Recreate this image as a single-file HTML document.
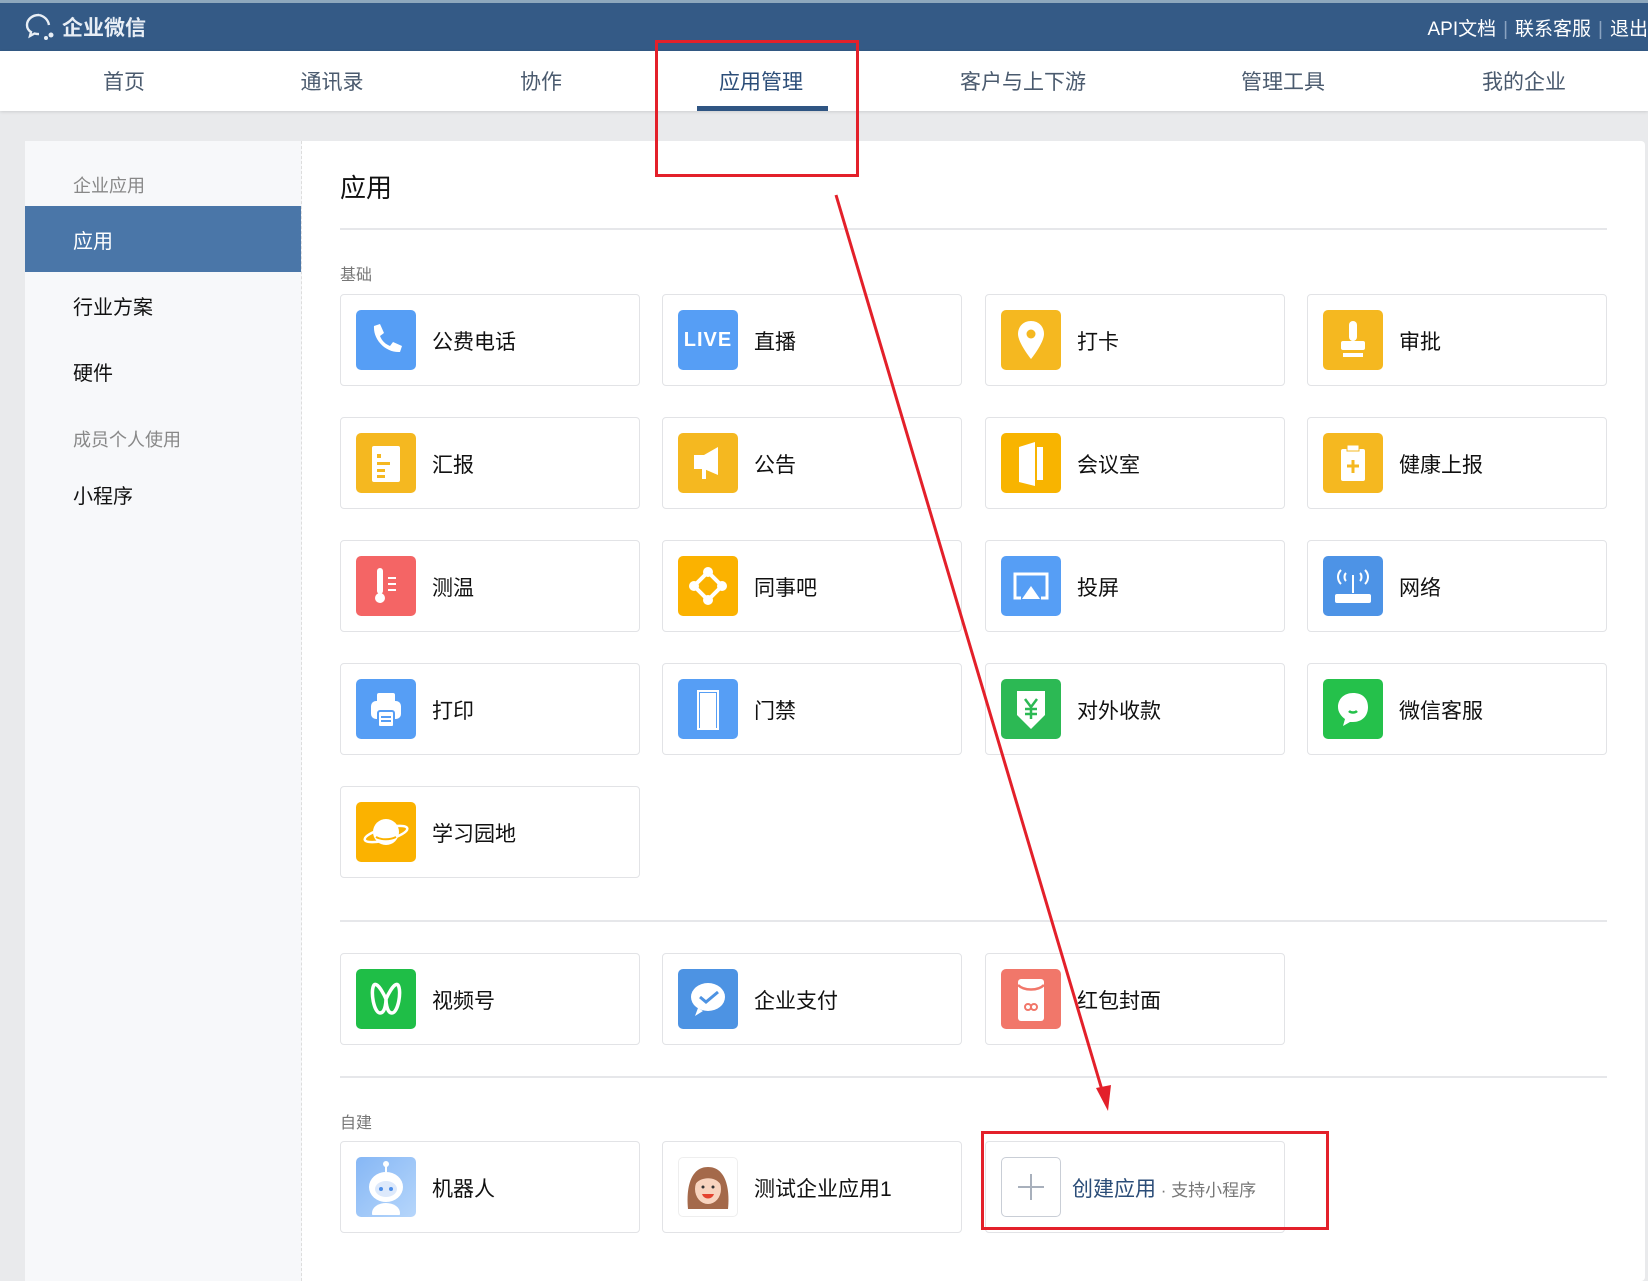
<!DOCTYPE html>
<html><head><meta charset="utf-8">
<style>
*{margin:0;padding:0;box-sizing:border-box}
body{width:1648px;height:1268px;overflow:hidden;background:#e9eaec;font-family:"Liberation Sans","Noto Sans CJK SC",sans-serif;position:relative}
.top{position:absolute;left:0;top:0;width:1648px;height:51px;background:#345a86;border-top:3px solid #8ea8bd}
.logo{position:absolute;left:24px;top:9px;color:#e8eef5;font-size:21px;font-weight:bold;display:flex;align-items:center;gap:4px}
.tr{position:absolute;right:0;top:11px;color:#fff;font-size:19px}
.tr span{margin:0 7px;color:#8aa3c0}
.nav{position:absolute;left:0;top:51px;width:1648px;height:60px;background:#fff;box-shadow:0 1px 3px rgba(0,0,0,.12)}
.nav div{position:absolute;top:15px;font-size:21px;color:#4a5a6e;transform:translateX(-50%)}
.nav .act{color:#2b4d78}
.ul{position:absolute;left:697px;top:106px;width:131px;height:5px;background:#2f5583}
.card{position:absolute;left:25px;top:141px;width:1620px;height:1140px;background:#fff;border-radius:4px}
.side{position:absolute;left:25px;top:141px;width:277px;height:1140px;background:#f7f8fa;border-right:1px dashed #ddd}
.side div{position:absolute;left:48px;font-size:20px;color:#111}
.side .g{color:#888;font-size:18px}
.side .on{left:0;width:276px;height:66px;top:65px;background:#4a76a8}
.title{position:absolute;left:340px;top:168px;font-size:26px;color:#111}
.hr{position:absolute;left:340px;width:1267px;height:2px;background:#e6e7ea}
.lbl{position:absolute;left:340px;font-size:16px;color:#777}
.t{position:absolute;width:300px;height:92px;border:1px solid #e2e3e6;border-radius:4px;background:#fff}
.t .i{position:absolute;left:15px;top:15px;width:60px;height:60px;border-radius:5px;display:flex;align-items:center;justify-content:center;overflow:hidden}
.t .n{position:absolute;left:91px;top:31px;font-size:21px;color:#111;white-space:nowrap}
.b{background:#569ef5}.y{background:#f5b820}.r{background:#f46565}.gr{background:#22bf4a}
.red{position:absolute;border:3px solid #e3202a}
</style></head><body>
<div class="top">
 <div class="logo"><svg width="34" height="30" viewBox="0 0 34 30"><path d="M15 3C8 3 3 7.5 3 13c0 3 1.5 5.5 4 7l-1 4 4.5-2.5c1.4.4 3 .6 4.5.6" fill="none" stroke="#e8eef5" stroke-width="2.4"/><path d="M25 13c-1-5.5-5-9-10-10" fill="none" stroke="#e8eef5" stroke-width="2.4"/><circle cx="27" cy="23" r="2.5" fill="#e8eef5"/><circle cx="22" cy="26" r="2" fill="#e8eef5"/></svg>企业微信</div>
 <div class="tr">API文档<span>|</span>联系客服<span>|</span>退出</div>
</div>
<div class="nav">
 <div style="left:124px">首页</div><div style="left:332px">通讯录</div><div style="left:541px">协作</div><div class="act" style="left:761px">应用管理</div><div style="left:1023px">客户与上下游</div><div style="left:1283px">管理工具</div><div style="left:1524px">我的企业</div>
</div>
<div class="ul"></div>
<div class="card"></div>
<div class="side">
 <div class="g" style="top:31px">企业应用</div>
 <div class="on"></div>
 <div style="top:84px;color:#fff">应用</div>
 <div style="top:150px">行业方案</div>
 <div style="top:216px">硬件</div>
 <div class="g" style="top:285px">成员个人使用</div>
 <div style="top:339px">小程序</div>
</div>
<div class="title">应用</div>
<div class="hr" style="top:228px"></div>
<div class="lbl" style="top:261px">基础</div>

<div class="t" style="left:340px;top:294px"><div class="i b"><svg width="40" height="40" viewBox="0 0 40 40"><path d="M8 6l6-2 4 9-4 3c2 5 5 8 10 10l3-4 9 4-2 6c-14 1-27-12-26-26z" fill="#fff"/></svg></div><div class="n">公费电话</div></div>
<div class="t" style="left:662px;top:294px"><div class="i b" style="color:#fff;font-weight:bold;font-size:20px;letter-spacing:1px">LIVE</div><div class="n">直播</div></div>
<div class="t" style="left:985px;top:294px"><div class="i y"><svg width="40" height="46" viewBox="0 0 40 46"><path d="M20 4c-8 0-13 6-13 13 0 9 13 25 13 25s13-16 13-25C33 10 28 4 20 4z" fill="#fff"/><circle cx="20" cy="17" r="4.5" fill="#f5b820"/></svg></div><div class="n">打卡</div></div>
<div class="t" style="left:1307px;top:294px"><div class="i y"><svg width="40" height="44" viewBox="0 0 40 44"><rect x="16" y="3" width="8" height="20" rx="4" fill="#fff"/><rect x="8" y="23" width="24" height="9" rx="2" fill="#fff"/><rect x="10" y="35" width="20" height="4" fill="#fff"/></svg></div><div class="n">审批</div></div>

<div class="t" style="left:340px;top:417px"><div class="i y"><svg width="36" height="44" viewBox="0 0 36 44"><rect x="4" y="5" width="28" height="36" rx="2" fill="#fff"/><rect x="9" y="13" width="4" height="4" fill="#f5b820"/><rect x="9" y="21" width="13" height="3" fill="#f5b820"/><rect x="9" y="28" width="8" height="3" fill="#f5b820"/><rect x="9" y="34" width="8" height="3" fill="#f5b820"/></svg></div><div class="n">汇报</div></div>
<div class="t" style="left:662px;top:417px"><div class="i y"><svg width="40" height="40" viewBox="0 0 40 40"><path d="M6 12h10l14-8v28l-14-6H6z" fill="#fff"/><rect x="14" y="24" width="4" height="12" fill="#fff"/></svg></div><div class="n">公告</div></div>
<div class="t" style="left:985px;top:417px"><div class="i y" style="background:#f8b400"><svg width="36" height="48" viewBox="0 0 36 48"><path d="M6 8l16-5v44l-16-4z" fill="#fff"/><rect x="24" y="8" width="6" height="33" fill="#fff"/></svg></div><div class="n">会议室</div></div>
<div class="t" style="left:1307px;top:417px"><div class="i y"><svg width="32" height="44" viewBox="0 0 32 44"><rect x="4" y="8" width="24" height="32" rx="2" fill="#fff"/><rect x="10" y="4" width="12" height="6" fill="#fff" stroke="#f5b820"/><path d="M16 19v13M10 25h12" stroke="#f5b820" stroke-width="3"/></svg></div><div class="n">健康上报</div></div>

<div class="t" style="left:340px;top:540px"><div class="i r"><svg width="36" height="44" viewBox="0 0 36 44"><rect x="9" y="4" width="6" height="26" rx="3" fill="#fff"/><circle cx="12" cy="34" r="5" fill="#fff"/><path d="M20 14h8M20 20h8M20 26h8" stroke="#fff" stroke-width="2"/></svg></div><div class="n">测温</div></div>
<div class="t" style="left:662px;top:540px"><div class="i y" style="background:#fbb200"><svg width="44" height="44" viewBox="0 0 44 44"><circle cx="22" cy="8" r="5" fill="#fff"/><circle cx="8" cy="22" r="5" fill="#fff"/><circle cx="36" cy="22" r="5" fill="#fff"/><circle cx="22" cy="36" r="5" fill="#fff"/><path d="M22 8L8 22 22 36 36 22z" fill="none" stroke="#fff" stroke-width="4"/></svg></div><div class="n">同事吧</div></div>
<div class="t" style="left:985px;top:540px"><div class="i b"><svg width="44" height="40" viewBox="0 0 44 40"><path d="M12 32H6V8h32v24h-6" fill="none" stroke="#fff" stroke-width="3"/><path d="M22 20l9 13H13z" fill="#fff"/></svg></div><div class="n">投屏</div></div>
<div class="t" style="left:1307px;top:540px"><div class="i b" style="background:#4d93e6"><svg width="44" height="44" viewBox="0 0 44 44"><path d="M10 6c-4 4-4 10 0 14M34 6c4 4 4 10 0 14M15 9c-2 2-2 6 0 8M29 9c2 2 2 6 0 8" fill="none" stroke="#fff" stroke-width="2"/><rect x="21" y="11" width="2" height="18" fill="#fff"/><rect x="4" y="30" width="36" height="9" rx="2" fill="#fff"/></svg></div><div class="n">网络</div></div>

<div class="t" style="left:340px;top:663px"><div class="i b"><svg width="40" height="44" viewBox="0 0 40 44"><rect x="11" y="6" width="18" height="10" rx="2" fill="#fff"/><rect x="5" y="14" width="30" height="18" rx="5" fill="#fff"/><rect x="12" y="24" width="16" height="16" rx="2" fill="#fff" stroke="#569ef5" stroke-width="2"/><path d="M15 30h10M15 34h10" stroke="#569ef5" stroke-width="2"/></svg></div><div class="n">打印</div></div>
<div class="t" style="left:662px;top:663px"><div class="i b"><svg width="32" height="44" viewBox="0 0 32 44"><rect x="6" y="4" width="20" height="38" fill="none" stroke="#fff" stroke-width="2"/><rect x="8" y="6" width="16" height="36" fill="#fff"/></svg></div><div class="n">门禁</div></div>
<div class="t" style="left:985px;top:663px"><div class="i gr" style="background:#2cb954"><svg width="36" height="44" viewBox="0 0 36 44"><path d="M4 4h28v24l-14 14L4 28z" fill="#fff"/><path d="M12 12l6 8 6-8M18 20v12M12 22h12M12 27h12" stroke="#2cb954" stroke-width="2.5" fill="none"/></svg></div><div class="n">对外收款</div></div>
<div class="t" style="left:1307px;top:663px"><div class="i gr" style="background:#25c14b"><svg width="44" height="44" viewBox="0 0 44 44"><path d="M22 6c-9 0-15 6-15 14 0 5 3 9 7 12l-2 7 7-4c1 0 2 0 3 0 9 0 15-6 15-15S31 6 22 6z" fill="#fff"/><path d="M18 24c2 2 6 2 8 0" stroke="#25c14b" stroke-width="2.5" fill="none"/></svg></div><div class="n">微信客服</div></div>

<div class="t" style="left:340px;top:786px"><div class="i y" style="background:#fbb200"><svg width="48" height="40" viewBox="0 0 48 40"><circle cx="24" cy="20" r="13" fill="#fff"/><ellipse cx="24" cy="22" rx="22" ry="6" fill="none" stroke="#fff" stroke-width="2.5" transform="rotate(-15 24 22)"/><path d="M14 25c5 3 14 3 20 0" stroke="#fbb200" stroke-width="2" fill="none"/></svg></div><div class="n">学习园地</div></div>

<div class="hr" style="top:920px"></div>
<div class="t" style="left:340px;top:953px"><div class="i gr" style="background:#1fbe47"><svg width="44" height="44" viewBox="0 0 44 44"><path d="M10 8c-4 6 0 28 6 28 6 0 6-14 6-14s0 14 6 14c6 0 10-22 6-28-4-4-12 14-12 14S14 4 10 8z" fill="none" stroke="#fff" stroke-width="3.5"/></svg></div><div class="n">视频号</div></div>
<div class="t" style="left:662px;top:953px"><div class="i b" style="background:#4d93e3"><svg width="44" height="44" viewBox="0 0 44 44"><ellipse cx="22" cy="20" rx="17" ry="14" fill="#fff"/><path d="M12 31l-3 8 8-5z" fill="#fff"/><path d="M14 20l6 5 12-10" stroke="#4d93e3" stroke-width="3" fill="none"/></svg></div><div class="n">企业支付</div></div>
<div class="t" style="left:985px;top:953px"><div class="i r" style="background:#f1776a"><svg width="36" height="48" viewBox="0 0 36 48"><rect x="5" y="4" width="26" height="42" rx="3" fill="#fff"/><path d="M5 10c6 6 20 6 26 0" stroke="#f1776a" stroke-width="2.5" fill="none"/><circle cx="15" cy="32" r="3" fill="none" stroke="#f1776a" stroke-width="2"/><circle cx="21" cy="32" r="3" fill="none" stroke="#f1776a" stroke-width="2"/></svg></div><div class="n">红包封面</div></div>

<div class="hr" style="top:1076px"></div>
<div class="lbl" style="top:1109px">自建</div>
<div class="t" style="left:340px;top:1141px"><div class="i" style="background:linear-gradient(135deg,#86b7f5,#b6d6fb)"><svg width="50" height="56" viewBox="0 0 50 56"><circle cx="25" cy="5" r="3" fill="#fff"/><rect x="24" y="6" width="2" height="8" fill="#fff"/><ellipse cx="25" cy="28" rx="17" ry="15" fill="#fff"/><ellipse cx="25" cy="30" rx="11" ry="8" fill="#dde9fb"/><circle cx="20" cy="30" r="2" fill="#4d8ee8"/><circle cx="30" cy="30" r="2" fill="#4d8ee8"/><ellipse cx="25" cy="54" rx="14" ry="10" fill="#fff"/></svg></div><div class="n">机器人</div></div>
<div class="t" style="left:662px;top:1141px"><div class="i" style="background:#fff;border:1px solid #eee"><svg width="56" height="56" viewBox="0 0 56 56"><path d="M8 50c-2-20 2-42 20-42s22 22 20 42z" fill="#a4694a"/><ellipse cx="28" cy="30" rx="13" ry="15" fill="#f8d4bf"/><path d="M15 26c4-8 20-10 26 0 0-10-6-14-13-14s-13 4-13 14z" fill="#a4694a"/><circle cx="23" cy="28" r="1.5" fill="#333"/><circle cx="33" cy="28" r="1.5" fill="#333"/><path d="M22 35c2 6 10 6 12 0z" fill="#e4432f"/></svg></div><div class="n">测试企业应用1</div></div>
<div class="t" style="left:985px;top:1141px"><div class="i" style="border:1px solid #c9ced6;background:#fff"><svg width="30" height="30" viewBox="0 0 30 30"><path d="M15 2v26M2 15h26" stroke="#a8b0bc" stroke-width="2"/></svg></div><div class="n" style="left:86px"><span style="color:#2b4d78">创建应用</span><span style="color:#777;font-size:17px"> · 支持小程序</span></div></div>

<div class="red" style="left:655px;top:40px;width:204px;height:137px"></div>
<div class="red" style="left:981px;top:1131px;width:348px;height:99px"></div>
<svg style="position:absolute;left:0;top:0" width="1648" height="1268"><line x1="836" y1="195" x2="1102" y2="1090" stroke="#e3202a" stroke-width="3"/><path d="M1096 1088l12 23 3-26z" fill="#e3202a"/></svg>
</body></html>
